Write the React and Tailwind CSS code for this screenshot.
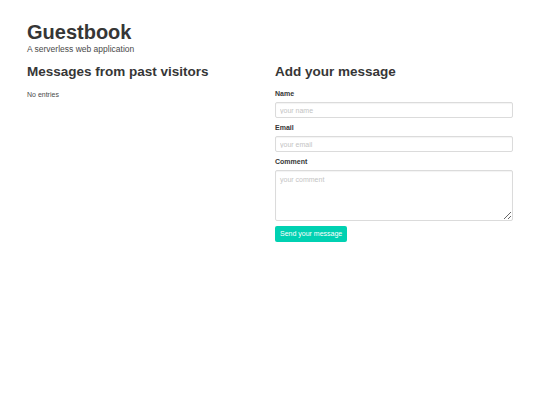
import React from 'react'

const font = { fontFamily: '"Liberation Sans", Arial, sans-serif' }

const Field = ({ label, placeholder, area }) => (
  <div className="mb-[5px]">
    <label className="block text-[7px] font-bold text-[#363636] leading-[9px] mb-[4px]">{label}</label>
    {area ? (
      <textarea
        placeholder={placeholder}
        className="block w-full h-[51px] border border-[#dbdbdb] rounded-[2px] px-[4px] py-[4px] text-[7px] placeholder:text-[#c4c4c4] shadow-[inset_0_1px_1px_rgba(10,10,10,0.05)] resize-y outline-none"
      />
    ) : (
      <input
        placeholder={placeholder}
        className="block w-full h-[16px] border border-[#dbdbdb] rounded-[2px] px-[4px] text-[7px] placeholder:text-[#c4c4c4] shadow-[inset_0_1px_1px_rgba(10,10,10,0.05)] outline-none"
      />
    )}
  </div>
)

export default function App() {
  return (
    <div className="min-h-screen bg-white text-[#4a4a4a]" style={font}>
      <div className="w-[486px] ml-[27px] pt-[20px]">
        <h1 className="text-[20px] font-bold text-[#363636] leading-[24px]">Guestbook</h1>
        <p className="text-[8.5px] leading-[10px] text-[#4a4a4a]">A serverless web application</p>
        <div className="grid grid-cols-2 gap-[10px] mt-[10px]">
          <div>
            <h2 className="text-[13.5px] font-bold text-[#363636] leading-[16px]">Messages from past visitors</h2>
            <p className="text-[7px] leading-[9px] mt-[10px]">No entries</p>
          </div>
          <div>
            <h2 className="text-[13.5px] font-bold text-[#363636] leading-[16px] mb-[9px]">Add your message</h2>
            <Field label="Name" placeholder="your name" />
            <Field label="Email" placeholder="your email" />
            <Field label="Comment" placeholder="your comment" area />
            <button className="block h-[16px] px-[5px] bg-[#00d1b2] text-white text-[7px] rounded-[2px]">Send your message</button>
          </div>
        </div>
      </div>
    </div>
  )
}
